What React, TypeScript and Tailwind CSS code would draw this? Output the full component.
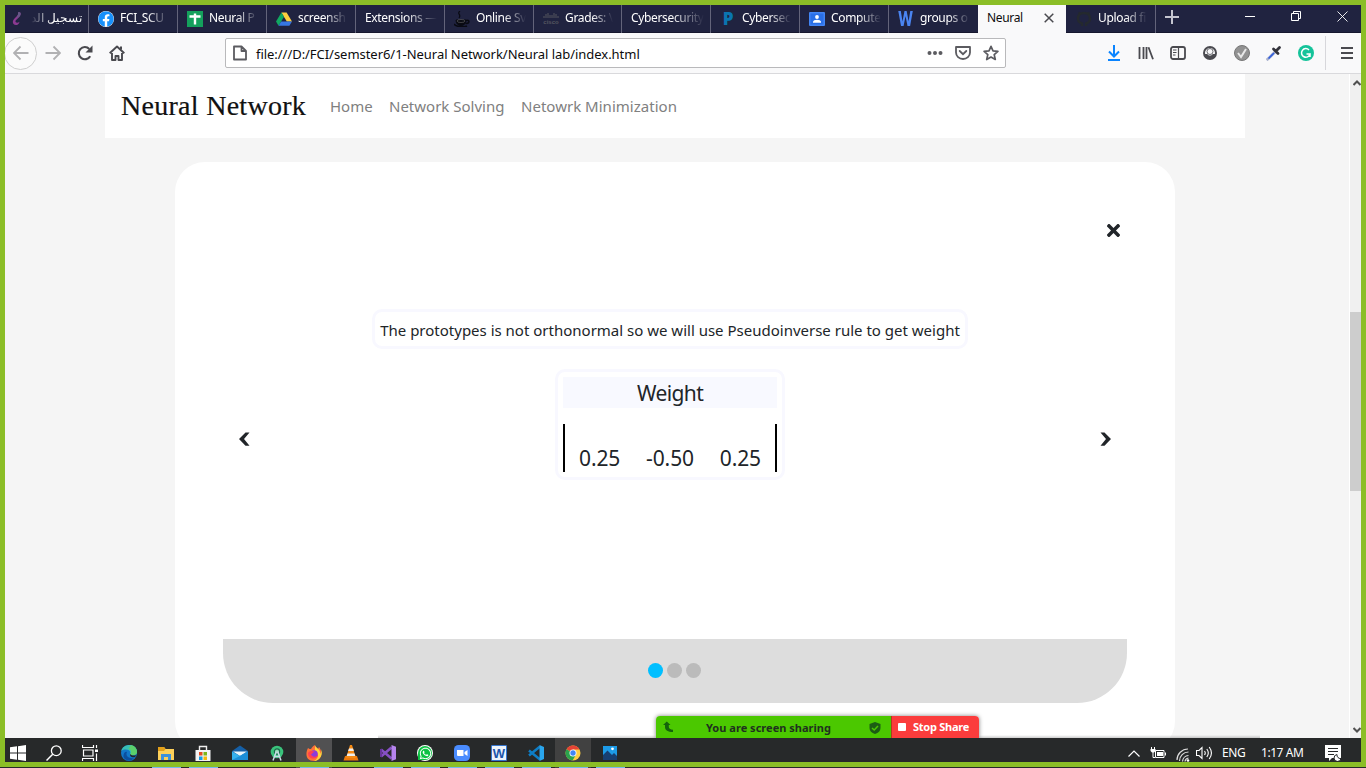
import React from "react";
import { FaWhatsapp, FaFacebook, FaTimes } from "react-icons/fa";

type P = { children: React.ReactNode; w?: number; h?: number; vb?: string };
const Svg = ({ children, w = 16, h = 16, vb = "0 0 16 16" }: P) => (
  <svg width={w} height={h} viewBox={vb} fill="none" className="block shrink-0">
    {children}
  </svg>
);

const PurpleMark = () => (
  <Svg>
    <path d="M9 1.500c2.500-1 3.500 1 2 3.500-2 3-4.500 3.500-4.500 5.500 0 1.500 2.500 1.500 4 .2-.5 3-4 4.600-6 2.300-1.500-2.500 0-4.500 2-6.500 2-1.700 3-3 2.500-5Z" fill="#8c3a92" />
    <path d="M9 1.500c2.500-1 3.500 1 2 3.500L8 7.500c0-2 1.500-3.500 1-6Z" fill="#665a87" />
  </Svg>
);
const Sheets = () => (
  <Svg>
    <path d="M0 0h16v16H0z" fill="#14a05c" />
    <path d="M2.500 5.500h11M8 2.500v11" stroke="#fff" strokeWidth="2.400" />
  </Svg>
);
const Drive = () => (
  <Svg>
    <path d="M5.400 1.500h5.200L16 10.500h-5.200z" fill="#ffcf3e" />
    <path d="M5.400 1.500 0 10.500l2.600 4.200L8 5.800z" fill="#11a861" />
    <path d="M5.200 10.500H16l-2.600 4.200H2.600z" fill="#3777e3" />
  </Svg>
);
const Cup = () => (
  <Svg>
    <path d="M6 0c-4 3 2 3-1 7" stroke="#090a12" strokeWidth="1.200" />
    <path d="M2 9h10c0 3.500-2 5.500-5 5.500S2 12.500 2 9Z" fill="#090a12" stroke="#090a12" />
    <path d="M12 9.500c4-1 4 3-.5 3M0 13c2 3 10 3.500 13 2" stroke="#090a12" strokeWidth="1.500" />
    <ellipse cx="7" cy="10" rx="4" ry="1.500" stroke="#666" strokeWidth=".6" />
  </Svg>
);
const Cisco = () => (
  <span className="flex w-4 flex-col items-center text-[#55565f]">
    <Svg w={16} h={6} vb="0 0 16 6">
      <path d="M1 3v2M3 1v4M5 0v5M7 2v3M9 2v3M11 0v5M13 1v4M15 3v2" stroke="currentColor" />
    </Svg>
    <span className="font-['Liberation_Sans'] text-[6px] font-bold leading-[6px]">cisco</span>
  </span>
);
const Classroom = () => (
  <Svg>
    <rect y="1" width="16" height="14" rx="1" fill="#4285f4" />
    <rect x="1.500" y="2.500" width="13" height="11" fill="#2a6fe6" />
    <circle cx="8" cy="6" r="1.900" fill="#fff" />
    <path d="M4 11c0-3 8-3 8 0v.7H4z" fill="#fff" />
  </Svg>
);
const Github = () => (
  <Svg>
    <path d="M6 15v-2.500c-2-.5-4-1.500-4-5C2 3.500 4.500 2 8 2s6 1.500 6 5.500c0 3.500-2 4.500-4 5V15" stroke="#24292e" strokeWidth="2.400" />
    <path d="M2.500 1.500 5 3M13.500 1.500 11 3" stroke="#24292e" strokeWidth="2" />
  </Svg>
);

type TabDef = { w: string; icon?: React.ReactNode; text: string; rtl?: boolean };
const tabs: TabDef[] = [
  { w: "w-[84px] pl-1 pr-[9px]", icon: <PurpleMark />, text: "تسجيل الد", rtl: true },
  { w: "w-[89px] pl-[9px] pr-2", icon: <FaFacebook size={16} color="#1890fb" className="rounded-full bg-white" />, text: "FCI_SCU" },
  { w: "w-[89px] pl-[9px] pr-2", icon: <Sheets />, text: "Neural P" },
  { w: "w-[89px] pl-[9px] pr-2", icon: <Drive />, text: "screensh" },
  { w: "w-[89px] pl-[9px] pr-2", text: "Extensions —" },
  { w: "w-[89px] pl-[9px] pr-2", icon: <Cup />, text: "Online Sv" },
  { w: "w-[88px] pl-[9px] pr-2", icon: <Cisco />, text: "Grades: \\" },
  { w: "w-[89px] pl-[9px] pr-2", text: "Cybersecurity" },
  {
    w: "w-[89px] pl-[9px] pr-2",
    icon: <span className="block w-4 text-center font-['Open_Sans'] text-[17px] font-extrabold leading-4 text-[#0a75b0]">P</span>,
    text: "Cybersec",
  },
  { w: "w-[89px] pl-[9px] pr-2", icon: <Classroom />, text: "Compute" },
  {
    w: "w-[90px] pl-[9px] pr-2",
    icon: <span className="block w-4 origin-left scale-x-[.82] font-['Roboto'] text-[21px] font-bold leading-4 text-[#4a84f0]">W</span>,
    text: "groups o",
  },
];

const Tab = ({ w, icon, text, rtl }: TabDef) => (
  <div className={`flex h-7 shrink-0 items-center border-r border-[#63647a] pb-[2px] ${w}`}>
    {icon && <span className="mr-[6px] shrink-0 pt-px">{icon}</span>}
    <span
      className={
        rtl
          ? "flex-1 whitespace-nowrap text-right text-[11.500px] [mask-image:linear-gradient(to_left,black_60%,transparent)]"
          : "flex-1 whitespace-nowrap text-[12px] tracking-[-0.34px] [mask-image:linear-gradient(to_right,black_55%,transparent)]"
      }
    >
      {text}
    </span>
  </div>
);

const TabBar = () => (
  <div className="flex h-[33px] shrink-0 border-b border-[#16172e] bg-[#202340] pl-[5px] pt-[5px] text-white">
    {tabs.map((t, i) => (
      <Tab key={i} {...t} />
    ))}
    <div className="-ml-px flex h-7 w-[88px] shrink-0 items-center justify-between bg-[#f9f9fa] pb-[2px] pl-[9px] pr-3 text-[12px] tracking-[-0.34px] text-[#0c0c0d]">
      Neural
      <Svg w={10} h={10} vb="0 0 10 10"><path d="M.7.700l8.600 8.600M9.300.700.700 9.300" stroke="#4a4a4f" strokeWidth="1.500" /></Svg>
    </div>
    <Tab w="w-[90px] pl-[10px] pr-2" icon={<Github />} text="Upload fi" />
    <div className="flex h-[23px] items-center pl-[9px]">
      <Svg w={14} h={14} vb="0 0 14 14"><path d="M7 0v14M0 7h14" stroke="#c4c5d0" strokeWidth="2" /></Svg>
    </div>
    <div className="ml-auto flex h-[22px] items-center pr-[18px]">
      <Svg w={11} h={11} vb="0 0 11 11"><path d="M0 5.500h10" stroke="#fff" /></Svg>
      <span className="ml-[35px]"><Svg w={11} h={11} vb="0 0 11 11"><path d="M.5 2.500h7v7h-7zM2.500 2.500v-2h7v7h-2" stroke="#fff" /></Svg></span>
      <span className="ml-[35px]"><Svg w={11} h={11} vb="0 0 11 11"><path d="m.5.500 10 10m0-10-10 10" stroke="#fff" strokeWidth=".9" /></Svg></span>
    </div>
  </div>
);

const Toolbar = () => (
  <div className="flex h-[41px] shrink-0 items-center border-b border-[#d9d9dc] bg-[#f9f9fa] pl-1">
    <div className="flex size-[33px] shrink-0 items-center justify-center rounded-full border border-[#cfcfcf] bg-[#fbfbfb]">
      <Svg w={16}><path d="M15.500 8H1M7.500 1.500 1 8l6.500 6.500" stroke="#b1b1b3" strokeWidth="1.800" /></Svg>
    </div>
    <span className="ml-2"><Svg><path d="M.5 8H15M8.500 1.500 15 8l-6.500 6.500" stroke="#b1b1b3" strokeWidth="1.800" /></Svg></span>
    <span className="ml-4">
      <Svg><path d="M13.200 11.200A6.100 6.100 0 1 1 12.300 3.900" stroke="#4a4a4f" strokeWidth="2.100" /><path d="M15.500.5v7h-7z" fill="#4a4a4f" /></Svg>
    </span>
    <span className="ml-4">
      <Svg><path d="M.7 8.300 8 1.500l7.300 6.800M3 8v7h3.500v-4h3v4H13V8" stroke="#4a4a4f" strokeWidth="1.900" strokeLinejoin="round" /><path d="M11 1.500h2v3h-2z" fill="#4a4a4f" /></Svg>
    </span>
    <div className="ml-[100px] flex h-[30px] w-[781px] items-center rounded-[2px] border border-[#b9b9bb] bg-white pl-[7px] pr-[6px]">
      <Svg w={14} h={16} vb="0 0 14 16"><path d="M1 1.500h7.500L13 6v8.500H1zM8.500 1.500V6H13" stroke="#5b5b60" strokeWidth="1.800" strokeLinejoin="round" /></Svg>
      <span className="ml-[9px] whitespace-nowrap pt-[3px] text-[13px] tracking-[-0.04px] text-[#0c0c0d]">file:///D:/FCI/semster6/1-Neural Network/Neural lab/index.html</span>
      <span className="ml-auto"><Svg><path d="M2.500 6a2 2 0 1 0 0 4 2 2 0 0 0 0-4Zm5.500 0a2 2 0 1 0 0 4 2 2 0 0 0 0-4Zm5.500 0a2 2 0 1 0 0 4 2 2 0 0 0 0-4Z" fill="#5b5b60" /></Svg></span>
      <span className="ml-3"><Svg><path d="M1 2h14v5.500a7 6.500 0 0 1-14 0z" stroke="#5b5b60" strokeWidth="1.800" strokeLinejoin="round" /><path d="m4.700 6 3.300 3.200L11.300 6" stroke="#5b5b60" strokeWidth="1.800" strokeLinecap="round" /></Svg></span>
      <span className="ml-3"><Svg><path d="m8 1.300 2 4.500 4.900.5-3.700 3.300 1.100 4.900L8 12l-4.300 2.500 1.100-4.900L1.100 6.300 6 5.800z" stroke="#5b5b60" strokeWidth="1.700" strokeLinejoin="round" /></Svg></span>
    </div>
    <div className="ml-[100px] flex items-center gap-4">
      <Svg><path d="M8 0v11M3 6.500l5 5 5-5M2 15h12" stroke="#0a84ff" strokeWidth="2" /></Svg>
      <Svg><path d="M1.500 2v12M5.500 2v12M8.500 2v12M10.500 2.200l4.500 12" stroke="#4a4a4f" strokeWidth="1.800" /></Svg>
      <Svg><rect x="1" y="2" width="14" height="12" rx="2" stroke="#4a4a4f" strokeWidth="1.800" /><path d="M8.500 2v12M3 5h3.500M3 7.500h3.500M3 10h2.500" stroke="#4a4a4f" strokeWidth="1.200" /></Svg>
      <Svg><circle cx="8" cy="8" r="6" stroke="#4a4a4f" strokeWidth="2" /><path d="M2.500 9h2.800c1.500 2 3.900 2 5.400 0h2.800c-1 6-10 6-11 0Z" fill="#4a4a4f" /><circle cx="8" cy="6.500" r="3" fill="#f9f9fa" stroke="#4a4a4f" strokeWidth=".8" /></Svg>
      <Svg><circle cx="8" cy="8" r="7.500" fill="#929292" stroke="#777" /><path d="m4 8 3 4 5-8" stroke="#e8e8e8" strokeWidth="2" /></Svg>
      <Svg><path d="M10 6 2 14l-1.500 1" stroke="#a9b1ce" strokeWidth="2.800" /><path d="m8 8-5.500 5.500" stroke="#315edb" strokeWidth="1.700" /><path d="m7.500 4 4.500 4.500M10.500 5.500l3-3" stroke="#33333b" strokeWidth="2.800" strokeLinecap="round" /></Svg>
      <Svg><circle cx="8" cy="8" r="8" fill="#15c39a" /><path d="M11 5a4.300 4.300 0 1 0 1 4H8.500M12 9v3" stroke="#fff" strokeWidth="1.500" /></Svg>
    </div>
    <div className="ml-[11px] h-[34px] w-px bg-[#d7d7db]" />
    <span className="ml-[13px]"><Svg><path d="M2 3h12M2 8h12M2 13h12" stroke="#4a4a4f" strokeWidth="2" /></Svg></span>
  </div>
);

const SitePage = () => (
  <div className="h-full w-[1344px] overflow-hidden bg-[#f5f5f5] pl-[100px]">
    <nav className="flex h-16 w-[1140px] items-center bg-white px-4 text-[15px] text-[#808080]">
      <span className="mr-6 w-[185px] whitespace-nowrap font-['Liberation_Serif'] text-[28px] leading-8 tracking-[0.28px] text-[#111] [-webkit-text-stroke:0.2px_#111]">Neural Network</span>
      <span className="w-[43px] whitespace-nowrap">Home</span>
      <span className="ml-4 w-[116px] whitespace-nowrap">Network Solving</span>
      <span className="ml-4 whitespace-nowrap tracking-[0.02px]">Netowrk Minimization</span>
    </nav>
    <section className="ml-[70px] mt-6 flex h-[589px] w-[1000px] flex-col rounded-[30px] bg-white px-12 text-[#212529]">
      <div className="flex h-[147px] shrink-0 justify-end pr-[4px] pt-[59px]">
        <FaTimes size={19} />
      </div>
      <div className="grid h-[330px] shrink-0 grid-cols-[32px_830px_42px]">
        <div className="pl-[15px] pt-[122px]">
          <Svg w={12} h={16} vb="0 0 12 16"><path d="M11.500 1.500H7.500L1 8l6.500 6.800h4L6 8z" fill="#212529" /></Svg>
        </div>
        <div className="flex flex-col items-center">
          <p className="flex h-[40px] w-[596px] items-center justify-center whitespace-nowrap rounded-[10px] border-[3px] border-[#f8f8ff] pt-[2px] text-[15px]">
            The prototypes is not orthonormal so we will use Pseudoinverse rule to get weight
          </p>
          <div className="mt-5 h-[111px] w-[230px] rounded-[10px] border-[3px] border-[#f8f8ff] p-[5px]">
            <div className="flex h-[31px] items-center justify-center bg-[#f8f9ff] pt-px text-[21px] leading-6 tracking-[-0.6px]">Weight</div>
            <div className="mt-4 flex h-12 items-end justify-between border-x-2 border-black px-[14px] text-[21px] leading-7 tracking-[-0.1px]">
              <span>0.25</span>
              <span>-0.50</span>
              <span>0.25</span>
            </div>
          </div>
        </div>
        <div className="pl-[15px] pt-[122px]">
          <Svg w={12} h={16} vb="0 0 12 16"><path d="M.5 1.500h4L11 8l-6.500 6.800h-4L6 8z" fill="#212529" /></Svg>
        </div>
      </div>
      <div className="flex h-16 shrink-0 items-center justify-center gap-1 rounded-b-[50px] bg-[#ddd] pb-[2px] pr-[1px]">
        <i className="size-[15px] rounded-full bg-[#00bfff]" />
        <i className="size-[15px] rounded-full bg-[#bbb]" />
        <i className="size-[15px] rounded-full bg-[#bbb]" />
      </div>
    </section>
  </div>
);

const Scrollbar = () => (
  <div className="flex h-full w-3 flex-col items-end overflow-hidden border-l border-white bg-[#f0f0f0]">
    <div className="flex h-[238px] w-full justify-center pl-[3px] pt-[6px]"><Svg w={8} h={6} vb="0 0 8 6"><path d="m.5 5 3.500-3.500L7.500 5" stroke="#505050" strokeWidth="2" /></Svg></div>
    <div className="h-[179px] w-full bg-[#cdcdcd]" />
    <div className="flex w-full flex-1 items-end justify-center pb-[5px] pl-[3px]"><Svg w={8} h={6} vb="0 0 8 6"><path d="M.5 1 4 4.500 7.500 1" stroke="#505050" strokeWidth="2" /></Svg></div>
  </div>
);

const ShareBar = () => (
  <div className="absolute left-[656px] top-[716px] h-[22px] w-[323px] rounded-t-[4px] shadow-[0_0_4px_rgba(0,0,0,0.5)] [clip-path:inset(-6px_-6px_0_-6px)]">
    <div className="flex h-[22px] overflow-hidden rounded-t-[4px] text-[11px] font-bold">
      <div className="flex w-[235px] items-center bg-[#4bc800] pl-[7px] text-[#20301f]">
        <Svg w={10} h={12} vb="0 0 10 12"><path d="M3.800.5 7.500 4H5.800v2c0 1.500 1.500 2.500 4.200 2.700v2.300C5 11 2 9.500 2 6V4H0z" fill="#14630b" /></Svg>
        <span className="ml-[33px] w-[126px] whitespace-nowrap pt-[2px] tracking-[0.02px]">You are screen sharing</span>
        <span className="ml-[37px] pt-[2px]"><Svg w={12} h={12} vb="0 0 12 12"><path d="M6 0 11.500 2v4c0 3-2 5-5.500 6C2.500 11 .5 9 .5 6V2z" fill="#1c5c14" /><path d="m3 6 2.200 2L9 4" stroke="#4bc800" strokeWidth="1.500" /></Svg></span>
      </div>
      <div className="flex w-[88px] items-center border-l border-[#b03a22] bg-[#fb3c3c] pl-[6px] text-white">
        <i className="mr-[7px] size-2 rounded-[1px] bg-white" />
        <span className="whitespace-nowrap pt-px tracking-[-0.25px]">Stop Share</span>
      </div>
    </div>
  </div>
);

const Edge = () => (
  <Svg>
    <circle cx="8" cy="8" r="8" fill="#1277c9" />
    <path d="M.3 6C2-2 15-2 16 6c.5 4-6 5-7 3 2-4-5-6-8.700-3Z" fill="#38bfb5" />
    <path d="M10 0c5 1 7 6 5.500 9-2 2-6 1.500-6 0 1.500-3 0-5-2-5z" fill="#5bd06b" />
    <path d="M6 7c-2 4 2 7 7 6-3 4-9 3-10.500-1C2 9 4 6 6 7Z" fill="#0b4f9e" />
    <path d="M9.500 9c1 2 4 1.800 6 1l-1.500 2c-3 1-6-1-4.500-3Z" fill="#252728" />
  </Svg>
);
const Explorer = () => (
  <Svg>
    <path d="M0 2h6l1.500 2H16v11H0z" fill="#fdd05a" />
    <path d="M0 2h6l1.500 2L6 6H0z" fill="#e3a01a" />
    <path d="M3 9h10v6h-3v-3H6v3H3z" fill="#3d91db" />
  </Svg>
);
const Store = () => (
  <Svg>
    <path d="M.500 5h15v11H.500z" fill="#f4f4f4" />
    <path d="M4.500 5V1.500h7V5" stroke="#eee" strokeWidth="1.400" />
    <path d="M4 7h3.500v3.500H4z" fill="#e34a22" /><path d="M8.500 7H12v3.500H8.500z" fill="#7bb51b" />
    <path d="M4 11.500h3.500V15H4z" fill="#159be5" /><path d="M8.500 11.500H12V15H8.500z" fill="#f5b90d" />
  </Svg>
);
const Mail = () => (
  <Svg>
    <path d="m0 6 8-5.500L16 6v9H0z" fill="#155fa6" />
    <path d="M1 6.500h14L8 11z" fill="#e8f5fd" />
    <path d="m0 6.500 8 4.500 8-4.500V15H0z" fill="#35b1ef" /><path d="m0 15 8-4 8-4.500V15z" fill="#1b8ed8" />
  </Svg>
);
const Android = () => (
  <Svg>
    <circle cx="8" cy="7" r="6.300" fill="#3ac37c" />
    <circle cx="8" cy="6.500" r="2.600" fill="#8edfb2" stroke="#1d6a4c" strokeWidth="1.200" />
    <path d="m7.300 6.500-3.300 9M8.700 6.500l3.300 9M5.500 11.500h5" stroke="#c9dae6" strokeWidth="1.500" />
  </Svg>
);
const Firefox = () => (
  <Svg>
    <path d="M2 3c1 1 2 1 3 1 1-2 2-3 4-4 0 2 2 2 3 4l1-2c4 5 3 14-5 14C0 16-1 9 2 3Z" fill="#ff7139" />
    <path d="M9 0c0 3 6 4 5 9 1-1 1.500-3 1-5 3 7-3 12-7 12 7-4 3-9 1-10z" fill="#ffd43d" />
    <circle cx="8" cy="9" r="3.800" fill="#8c3adb" />
    <path d="M2 8c2-3 5-2 7-1-3 0-2 2-4 2 1 3 4 4 7 1-1 5-10 5-10-2Z" fill="#ff4151" />
  </Svg>
);
const Vlc = () => (
  <Svg>
    <path d="M2 11h12l1.500 4.500H.500z" fill="#ed7a0b" />
    <path d="M7 0h2l4 13H3z" fill="#f58a13" />
    <path d="M6 3.500h4l.9 2.500H5.100zM4.500 8.500h7l.8 2.500H3.700z" fill="#eee" />
  </Svg>
);
const VisualStudio = () => (
  <Svg>
    <path d="M1 4.500 11.500 13.500M1 11.500 11.500 2.500" stroke="#8650c5" strokeWidth="2.600" />
    <path d="M1 4v8" stroke="#68349c" strokeWidth="2" />
    <path d="m11.500 0 4.500 1.800v12.400L11.500 16z" fill="#b584ed" />
  </Svg>
);
const VsCode = () => (
  <Svg>
    <path d="m1 10.500 11-9M1 5.500l11 9" stroke="#0e7dc6" strokeWidth="2.500" />
    <path d="m11.500 0 4.500 2v12l-4.500 2z" fill="#2aa6ee" />
  </Svg>
);
const Zoom = () => (
  <Svg>
    <rect width="16" height="16" rx="4.500" fill="#4a8cff" />
    <path d="M3 5h6.500v6H4a1 1 0 0 1-1-1zM10.500 7l3-2v6l-3-2z" fill="#fff" />
  </Svg>
);
const Word = () => (
  <span className="flex size-4 items-center justify-center rounded-[1px] border border-[#3575ce] bg-[#edf3fb] font-['Liberation_Sans'] text-[13px] font-bold leading-none text-[#1d55ab]">W</span>
);
const Chrome = () => (
  <Svg>
    <circle cx="8" cy="8" r="7.500" fill="#ffcd40" />
    <path d="M8 8 1.500 4.200A7.500 7.500 0 0 1 14.500 4.500H8z" fill="#e54335" />
    <path d="M8 8 1.500 4.200A7.500 7.500 0 0 0 7.500 15.500L11 9.700z" fill="#2ba24c" />
    <circle cx="8" cy="8" r="3.500" fill="#fff" /><circle cx="8" cy="8" r="2.700" fill="#4285f4" />
  </Svg>
);
const Photos = () => (
  <Svg>
    <path d="M1 1h14v14H1z" fill="#1c9be8" />
    <path d="m1 10 4.500-4.500L10 10l2-2 3 3v4H1z" fill="#173f72" />
    <circle cx="10.500" cy="3.800" r="1.400" fill="#fff" />
  </Svg>
);
const WhatsApp = () => (
  <span className="flex size-4 items-center justify-center rounded-full bg-white">
    <span className="flex size-[14px] items-center justify-center rounded-full rounded-bl-[3px] bg-[#0dc143]">
      <FaWhatsapp size={13} color="#fff" />
    </span>
  </span>
);

const apps: { icon: React.ReactNode; cls: string; open?: boolean }[] = [
  { icon: <Edge />, cls: "" },
  { icon: <Explorer />, cls: "", open: true },
  { icon: <Store />, cls: "", open: true },
  { icon: <Mail />, cls: "" },
  { icon: <Android />, cls: "" },
  { icon: <Firefox />, cls: "bg-[#515152]", open: true },
  { icon: <Vlc />, cls: "" },
  { icon: <VisualStudio />, cls: "", open: true },
  { icon: <WhatsApp />, cls: "", open: true },
  { icon: <Zoom />, cls: "", open: true },
  { icon: <Word />, cls: "", open: true },
  { icon: <VsCode />, cls: "", open: true },
  { icon: <Chrome />, cls: "bg-[#414141]", open: true },
  { icon: <Photos />, cls: "", open: true },
];

const Taskbar = () => (
  <div className="flex h-[30px] shrink-0 bg-[#27292a] text-white">
    <div className="flex h-[30px] items-center pl-[10px]">
      <Svg><path d="M0 2.300 7 1.300V7.500H0zM8 1.200 16 0v7.500H8zM0 8.500h7v6.200l-7-1zM8 8.500h8V16l-8-1.200z" fill="#fff" /></Svg>
      <span className="ml-5"><Svg><circle cx="10.300" cy="5.700" r="4.900" stroke="#fff" strokeWidth="1.300" /><path d="M6.700 9.300.500 15.500" stroke="#fff" strokeWidth="1.500" /></Svg></span>
      <span className="ml-5"><Svg w={17} h={16} vb="0 0 17 16"><path d="M.5 0v2.500h11V0M1.500 5h9.500v6H1.500zM.5 16v-2.500h11V16M14.500 0v3M14.500 8.500V16" stroke="#fff" strokeWidth="1.200" /><path d="M13 4.500h3v2.500h-3z" fill="#fff" /></Svg></span>
    </div>
    <div className="ml-[12px] flex">
      {apps.map((a, i) => (
        <div key={i} className={`flex h-[30px] w-[37px] flex-col items-center border-r border-[#27292a] ${a.cls}`}>
          <div className="flex h-[29px] items-center pt-px">{a.icon}</div>
        </div>
      ))}
    </div>
    <div className="ml-auto flex items-center pr-[24px] text-[12px]">
      <Svg w={12} h={7} vb="0 0 12 7"><path d="m.5 6.500 5.500-5.500 5.500 5.500" stroke="#fff" strokeWidth="1.200" /></Svg>
      <span className="ml-[10px]"><Svg w={16} h={13} vb="0 0 16 13"><path d="M5.500 3.500H14v7H5.500zM15.500 5.500v3M1.500 0v2M4.500 0v2M3 5v5.500h2" stroke="#fff" /><path d="M7 5h6v4H7zM.500 2h5v2l-1.500 1.500H2L.500 4z" fill="#fff" /></Svg></span>
      <span className="ml-[10px] pt-1"><Svg w={14} h={14} vb="0 0 14 14"><path d="M1 12A11 11 0 0 1 12 1M3.500 13A9 9 0 0 1 12.500 4M6.500 13.500A6.500 6.500 0 0 1 12.500 7.500M9 13.500A4 4 0 0 1 12.500 10" stroke="#ddd" strokeWidth="1.200" /><circle cx="12" cy="12.500" r="1.300" fill="#fff" /></Svg></span>
      <span className="ml-[6px]"><Svg w={17} h={14} vb="0 0 17 14"><path d="M.500 4.500H3l3-3v11l-3-3H.500zM8.500 5q1.500 2 0 4M10.800 3q3 4 0 8M13.200 1q4.500 6 0 12" stroke="#fff" strokeWidth="1.100" /></Svg></span>
      <span className="ml-[9px] w-[24px] whitespace-nowrap tracking-[-0.45px]">ENG</span>
      <span className="ml-[15px] w-[44px] whitespace-nowrap tracking-[-0.45px]">1:17 AM</span>
      <span className="ml-[20px]"><Svg w={17} h={16} vb="0 0 17 16"><path d="M0 0h16v13H7l-3 3v-3H0z" fill="#fff" /><path d="M3 3.500h10M3 6.500h10M3 9.500h6" stroke="#27292a" strokeWidth="1.200" /><path d="M12 9.500a3.500 3.500 0 1 0 4 4 3.500 3.500 0 0 1-4-4Z" fill="#fff" stroke="#27292a" /></Svg></span>
    </div>
  </div>
);

export default function App() {
  return (
    <div className="relative flex h-[768px] w-[1366px] flex-col overflow-hidden bg-[#f5f5f5] font-['Noto_Sans',sans-serif]">
      <TabBar />
      <Toolbar />
      <div className="flex h-[664px] shrink-0 pl-[5px]">
        <SitePage />
        <Scrollbar />
      </div>
      <Taskbar />
      <div className="absolute left-[378px] top-[735px] h-[3px] w-[882px] bg-gradient-to-t from-black/20 to-transparent" />
      <ShareBar />
      <div className="pointer-events-none absolute inset-x-0 top-0 h-[767px] border-[5px] border-[#8bbe27]" />
      <div className="absolute left-[148px] top-[767px] flex h-px">
        {apps.slice(1).map((a, i) => (
          <i key={i} className={a.open ? "mx-1 h-px w-[29px] bg-[#76b9ed]" : "mx-1 h-px w-[29px]"} />
        ))}
      </div>
    </div>
  );
}
